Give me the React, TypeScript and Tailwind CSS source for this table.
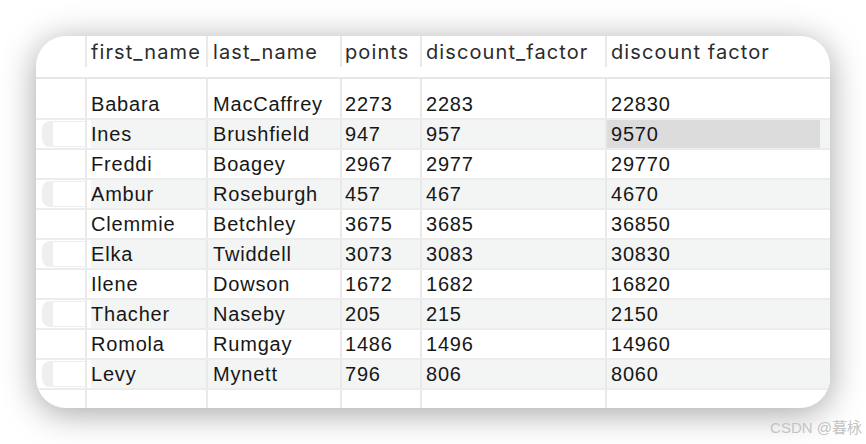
import React from "react";

type Row = [string, string, string, string, string];

const rows: Row[] = [
  ["Babara", "MacCaffrey", "2273", "2283", "22830"],
  ["Ines", "Brushfield", "947", "957", "9570"],
  ["Freddi", "Boagey", "2967", "2977", "29770"],
  ["Ambur", "Roseburgh", "457", "467", "4670"],
  ["Clemmie", "Betchley", "3675", "3685", "36850"],
  ["Elka", "Twiddell", "3073", "3083", "30830"],
  ["Ilene", "Dowson", "1672", "1682", "16820"],
  ["Thacher", "Naseby", "205", "215", "2150"],
  ["Romola", "Rumgay", "1486", "1496", "14960"],
  ["Levy", "Mynett", "796", "806", "8060"],
];

const headers = ["first_name", "last_name", "points", "discount_factor", "discount factor"];

// widths incl. the 2px column line on the right
const colW = ["w-[121px]", "w-[134px]", "w-[80px]", "w-[185px]", "flex-1"];
const headW = ["w-[119px]", "w-[132px]", "w-[78px]", "w-[183px]", "flex-1"];
const colPad = ["pl-[4px]", "pl-[5px]", "pl-[3px]", "pl-[4px]", "pl-[4px]"];

const line = "border-r-2 border-[#e9e9e9]";

function Sep() {
  return <div className="w-[2px] h-[31px] bg-[#e9e9e9] shrink-0" />;
}

function Header() {
  return (
    <div className="flex h-[43px] border-b-2 border-[#e6e6e6] font-['Inter',sans-serif] text-[20px] tracking-[1.1px] text-[#2b2b2b]">
      <div className="w-[49px] shrink-0" />
      {headers.map((h, i) => (
        <React.Fragment key={h}>
          <Sep />
          <div
            className={`${headW[i]} ${colPad[i]} shrink-0 pt-[1px] leading-[31px] whitespace-nowrap overflow-hidden`}
          >
            {h}
          </div>
        </React.Fragment>
      ))}
    </div>
  );
}

function EmptyRow({ className }: { className: string }) {
  return (
    <div className={`flex ${className}`}>
      <div className={`w-[51px] shrink-0 ${line}`} />
      {colW.map((w, i) => (
        <div key={i} className={`${w} shrink-0 ${i < 4 ? line : ""}`} />
      ))}
    </div>
  );
}

function DataRow({ row, index }: { row: Row; index: number }) {
  const banded = index % 2 === 1;
  const band = banded ? "bg-[#f3f4f4]" : "bg-white";
  return (
    <div className="flex h-[30px] border-b-2 border-[#ececec]">
      <div className={`w-[51px] shrink-0 ${line} pl-[6px] py-[1px]`}>
        {banded && (
          <div className="flex h-full">
            <div className="w-[11px] bg-[#eef0f0] rounded-l-[8px]" />
            <div className="flex-1 border-y border-[#eeeeee] bg-white" />
          </div>
        )}
      </div>
      {row.map((v, i) => {
        const selected = index === 1 && i === 4;
        return (
          <div
            key={i}
            className={`${colW[i]} shrink-0 ${i < 4 ? line : ""} ${
              i === 0 ? "pl-[4px] bg-white" : band
            }`}
          >
            <div
              className={`h-full leading-[28px] whitespace-nowrap ${
                i === 0 ? band : colPad[i]
              } ${selected ? "bg-[#dcdcdc] mr-[10px]" : ""}`}
            >
              {v}
            </div>
          </div>
        );
      })}
    </div>
  );
}

export default function App() {
  return (
    <div className="w-[866px] h-[444px] bg-white pt-[36px] overflow-hidden">
      <div className="ml-[36px] w-[794px] h-[372px] rounded-[30px] bg-white overflow-hidden flex flex-col shadow-[0_5px_34px_rgba(0,0,0,0.36)]">
        <Header />
        <div className="flex-1 flex flex-col font-['Liberation_Sans',Arial,sans-serif] text-[20px] tracking-[0.8px] text-[#171717]">
          <EmptyRow className="h-[11px]" />
          {rows.map((r, i) => (
            <DataRow key={r[0]} row={r} index={i} />
          ))}
          <EmptyRow className="flex-1" />
        </div>
      </div>
      <div className="flex justify-end pr-[4px] mt-[11px] font-['Liberation_Sans','Noto_Sans_CJK_SC',sans-serif] text-[15px] leading-[18px] text-[#c4c4c4]">
        CSDN @暮栐
      </div>
    </div>
  );
}
